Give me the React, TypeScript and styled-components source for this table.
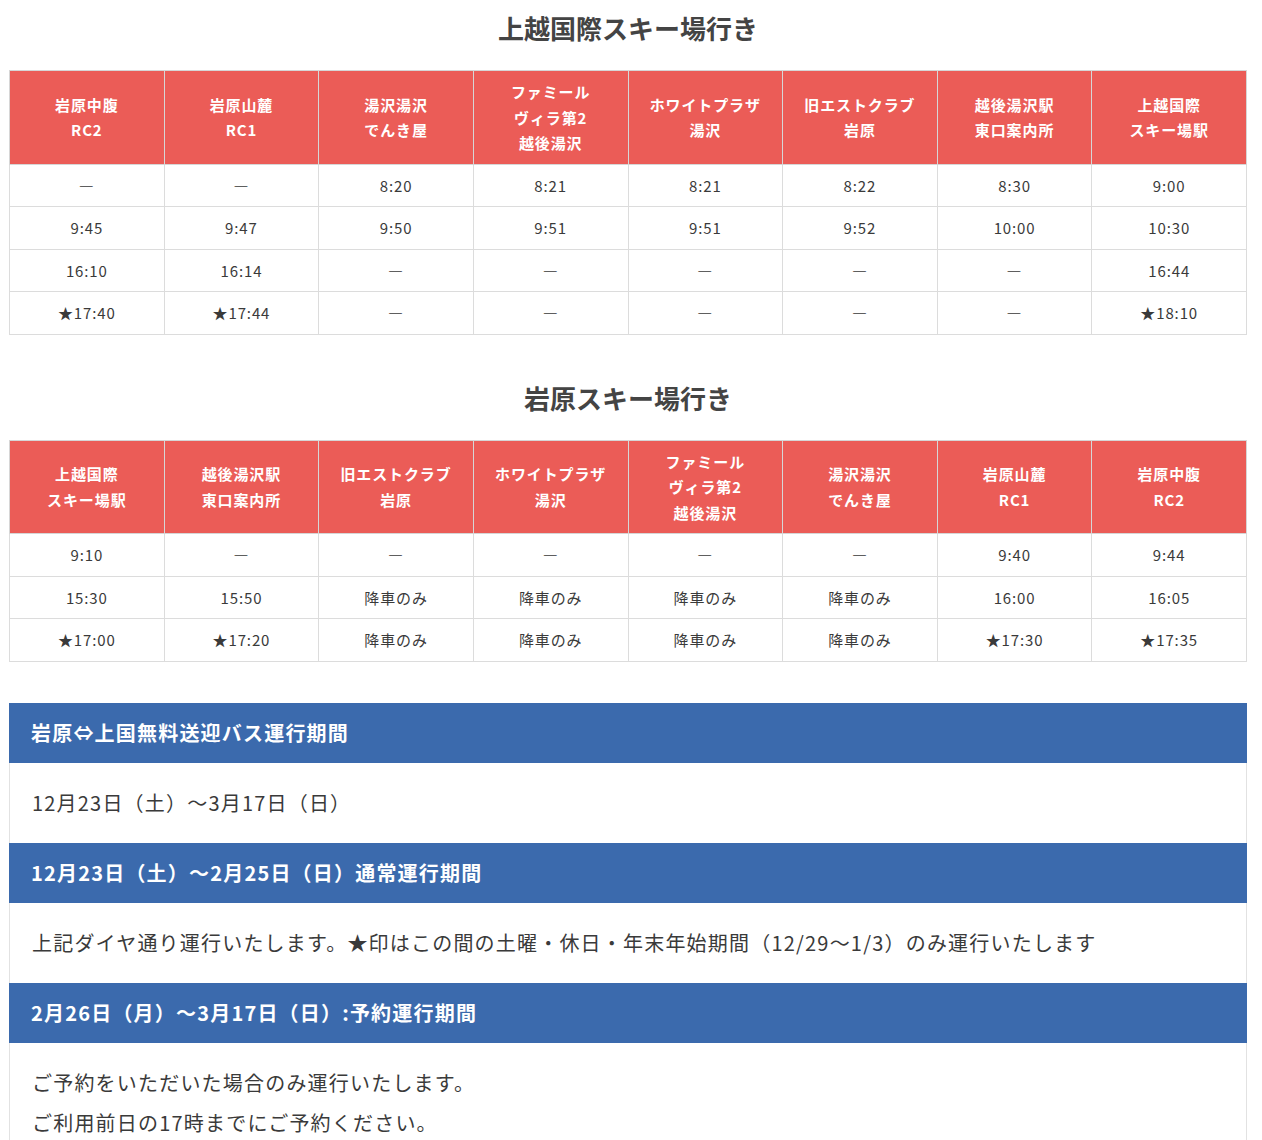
import styled, { createGlobalStyle } from "styled-components";

const GlobalStyle = createGlobalStyle`
  body {
    margin: 0;
    background: #fff;
    font-family: "Noto Sans CJK JP", "Noto Sans", sans-serif;
    color: #333;
  }
`;

const Page = styled.div`
  width: 1238px;
  padding: 10px 0 0 9px;
`;

const Title = styled.h2`
  margin: 0 0 24px;
  text-align: center;
  font-size: 26px;
  line-height: 36px;
  font-weight: 700;
  color: #444;
`;

const Timetable = styled.table`
  width: 100%;
  table-layout: fixed;
  border-collapse: collapse;
  margin-bottom: 45px;
  letter-spacing: 0.055em;
`;

const Th = styled.th`
  background: #eb5c57;
  color: #fff;
  font-size: 15px;
  font-weight: 700;
  line-height: 25.5px;
  padding: 8px 4px;
  border: 1px solid #d6d6d6;
  text-align: center;
  vertical-align: middle;
`;

const Td = styled.td`
  font-size: 15px;
  line-height: 25.5px;
  padding: 8px 4px;
  border: 1px solid #dcdcdc;
  text-align: center;
  color: #3a3a3a;
`;

const Notice = styled.div`
  margin-top: -4px;
  letter-spacing: 0.075em;
`;

const NoticeHead = styled.div`
  background: #3b6aad;
  color: #fff;
  font-size: 20px;
  font-weight: 700;
  line-height: 28px;
  padding: 16px 22px;
`;

const NoticeBody = styled.div`
  border-left: 1px solid #e2e2e2;
  border-right: 1px solid #e2e2e2;
  font-size: 20px;
  line-height: 40px;
  padding: 20px 22px;
  color: #3a3a3a;

  p {
    margin: 0;
  }
`;

type Table = { heads: string[][]; rows: string[][] };

const D = "―";

const toSki: Table = {
  heads: [
    ["岩原中腹", "RC2"],
    ["岩原山麓", "RC1"],
    ["湯沢湯沢", "でんき屋"],
    ["ファミール", "ヴィラ第2", "越後湯沢"],
    ["ホワイトプラザ", "湯沢"],
    ["旧エストクラブ", "岩原"],
    ["越後湯沢駅", "東口案内所"],
    ["上越国際", "スキー場駅"],
  ],
  rows: [
    [D, D, "8:20", "8:21", "8:21", "8:22", "8:30", "9:00"],
    ["9:45", "9:47", "9:50", "9:51", "9:51", "9:52", "10:00", "10:30"],
    ["16:10", "16:14", D, D, D, D, D, "16:44"],
    ["★17:40", "★17:44", D, D, D, D, D, "★18:10"],
  ],
};

const toIwappara: Table = {
  heads: [
    ["上越国際", "スキー場駅"],
    ["越後湯沢駅", "東口案内所"],
    ["旧エストクラブ", "岩原"],
    ["ホワイトプラザ", "湯沢"],
    ["ファミール", "ヴィラ第2", "越後湯沢"],
    ["湯沢湯沢", "でんき屋"],
    ["岩原山麓", "RC1"],
    ["岩原中腹", "RC2"],
  ],
  rows: [
    ["9:10", D, D, D, D, D, "9:40", "9:44"],
    ["15:30", "15:50", "降車のみ", "降車のみ", "降車のみ", "降車のみ", "16:00", "16:05"],
    ["★17:00", "★17:20", "降車のみ", "降車のみ", "降車のみ", "降車のみ", "★17:30", "★17:35"],
  ],
};

function Schedule({ title, data }: { title: string; data: Table }) {
  return (
    <>
      <Title>{title}</Title>
      <Timetable>
        <thead>
          <tr>
            {data.heads.map((lines, i) => (
              <Th key={i}>
                {lines.map((l, j) => (
                  <span key={j}>
                    {j > 0 && <br />}
                    {l}
                  </span>
                ))}
              </Th>
            ))}
          </tr>
        </thead>
        <tbody>
          {data.rows.map((row, i) => (
            <tr key={i}>
              {row.map((cell, j) => (
                <Td key={j}>{cell}</Td>
              ))}
            </tr>
          ))}
        </tbody>
      </Timetable>
    </>
  );
}

export default function App() {
  return (
    <>
      <GlobalStyle />
      <Page>
        <Schedule title="上越国際スキー場行き" data={toSki} />
        <Schedule title="岩原スキー場行き" data={toIwappara} />
        <Notice>
          <NoticeHead>岩原⇔上国無料送迎バス運行期間</NoticeHead>
          <NoticeBody>
            <p>12月23日（土）〜3月17日（日）</p>
          </NoticeBody>
          <NoticeHead>12月23日（土）〜2月25日（日）通常運行期間</NoticeHead>
          <NoticeBody>
            <p>上記ダイヤ通り運行いたします。★印はこの間の土曜・休日・年末年始期間（12/29〜1/3）のみ運行いたします</p>
          </NoticeBody>
          <NoticeHead>2月26日（月）〜3月17日（日）:予約運行期間</NoticeHead>
          <NoticeBody>
            <p>ご予約をいただいた場合のみ運行いたします。</p>
            <p>ご利用前日の17時までにご予約ください。</p>
          </NoticeBody>
        </Notice>
      </Page>
    </>
  );
}
